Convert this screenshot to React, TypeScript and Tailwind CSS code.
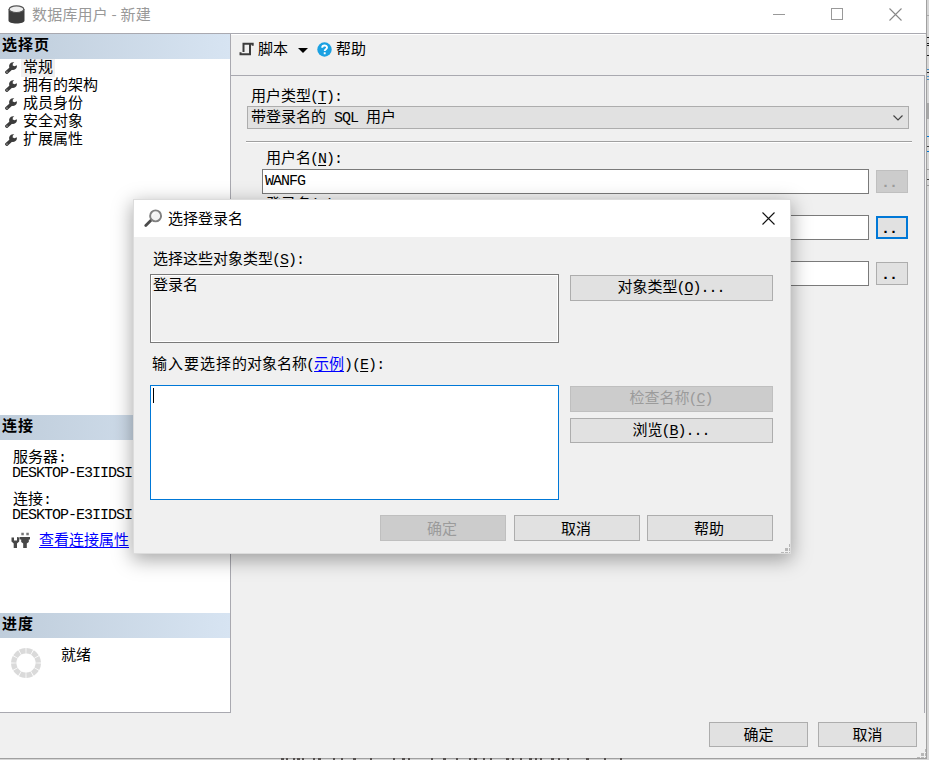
import React from 'react'

const pages = ['常规', '拥有的架构', '成员身份', '安全对象', '扩展属性']

// colour bands of the window that shows past the right edge
const edgeBands = [
  { top: 15, color: '#a9a9a9' },
  { top: 37, color: '#1a1a1a' },
  { top: 43, color: '#1a1a1a' },
  { top: 45, color: '#1a1a1a' },
  { top: 55, color: '#1a1a1a' },
  { top: 69, color: '#4a8fc4' },
  { top: 72, color: '#222222' },
  { top: 76, color: '#4a8fc4' },
  { top: 79, color: '#4a8fc4' },
  { top: 136, color: '#0078d7' },
  { top: 146, color: '#444444' },
  { top: 151, color: '#0078d7' },
  { top: 169, color: '#999999' },
  { top: 179, color: '#444444' },
  { top: 185, color: '#999999' },
]

const bottomTicks = [281, 286, 293, 297, 302, 313, 318, 333, 341, 353, 370, 393, 402, 408, 431, 443, 456, 469, 474, 483, 490, 506, 512, 520, 529, 535, 540, 551, 558, 567, 586, 604, 620]

const Latin: React.FC<{ children: React.ReactNode; className?: string }> = ({ children, className = '' }) => (
  <span className={`relative font-['Liberation_Mono',monospace] text-[15px] tracking-[-1px] whitespace-pre ${className}`}>{children}</span>
)

// accelerator key, e.g. (N):
const Key: React.FC<{ k: string; tail?: string }> = ({ k, tail = ':' }) => (
  <Latin className="-left-px">(<span className="underline underline-offset-2">{k}</span>){tail}</Latin>
)

const Button: React.FC<{ children: React.ReactNode; className?: string; disabled?: boolean }> = ({ children, className = '', disabled }) => (
  <button
    disabled={disabled}
    className={`border flex items-center justify-center leading-none whitespace-nowrap ${disabled ? 'bg-[#cccccc] border-[#bfbfbf] text-[#9b9b9b]' : 'bg-[#e1e1e1] border-[#adadad]'} ${className}`}
  >
    <span className="pb-[2px]">{children}</span>
  </button>
)

const PanelHeader: React.FC<{ title: string }> = ({ title }) => (
  <h2 className="h-[25px] shrink-0 pl-[2px] leading-[20px] font-bold tracking-[1px] bg-linear-to-r from-[#bfcddb] to-[#d7e4f2]">{title}</h2>
)

const Wrench: React.FC = () => (
  <svg width="12" height="12" viewBox="0 0 12 12" className="shrink-0 -mt-px">
    <path d="M1.800 10.200 6.500 6" stroke="#3c3c3c" strokeWidth="3.400" strokeLinecap="round" />
    <path d="M9.300.400A3.900 3.900 0 1 0 11.800 3.200L9.600 4.300 7.700 3.400 7.800 1.600z" fill="#3c3c3c" />
    <circle cx="2" cy="10" r=".6" fill="#fff" />
  </svg>
)

const Database: React.FC = () => (
  <svg width="17" height="19" viewBox="0 0 17 19">
    <path d="M.5 4v11.500c0 1.900 3.500 3 8 3s8-1.100 8-3V4z" fill="#3d3d3d" />
    <ellipse cx="8.500" cy="4.200" rx="7.300" ry="3.300" fill="#eeeeee" stroke="#555" strokeWidth="1.200" />
  </svg>
)

const Magnifier: React.FC = () => (
  <svg width="19" height="19" viewBox="0 0 19 19">
    <path d="M1.800 16.500 7 11.300" stroke="#4a4a4a" strokeWidth="2.800" strokeLinecap="round" />
    <circle cx="11.600" cy="6.900" r="5.500" fill="#f2f2f2" stroke="#808080" strokeWidth="1.900" />
    <path d="M8.500 6.500a3.200 3.200 0 0 1 3-2.700" fill="none" stroke="#fff" strokeWidth="1" />
  </svg>
)

const Plugs: React.FC = () => (
  <svg width="20" height="17" viewBox="0 0 20 17" fill="#484848">
    <path d="M.5 5.500v4l2.200 2V16h3.300v-4.500l2.200-2v-4L6 5v3.500H3V5.500z" />
    <path d="M8.500 5h10.500v2.500h-1.200V10l-2 1.500V16h-3.600v-4.500l-2-1.500V7.500H8.500z" />
    <path d="M10.300.800h2.500V3.300h-2.500zM15.300.800h2.500V3.300h-2.500z" fill="#777" />
  </svg>
)

const Grip: React.FC = () => (
  <svg width="9" height="9" viewBox="0 0 9 9" fill="#b8b8b8" className="absolute right-0 bottom-0">
    <path d="M0 8h3v1H0zM4 8h3v1H4zM4 4h3v3H4zM8 0h1v3H8zM8 4h1v3H8zM8 8h1v1H8z" />
  </svg>
)

const Close: React.FC<{ color: string }> = ({ color }) => (
  <svg width="13" height="13" viewBox="0 0 13 13">
    <path d="M.5.5l12 12M12.500.5l-12 12" stroke={color} strokeWidth="1.100" />
  </svg>
)

const Spinner: React.FC = () => (
  <svg width="30" height="30" viewBox="0 0 30 30">
    <circle cx="15" cy="15" r="12.300" fill="none" stroke="#dadada" strokeWidth="5.400" pathLength="120" strokeDasharray="8.800 1.200" strokeDashoffset="-0.600" />
  </svg>
)

const Sidebar: React.FC = () => (
  <aside className="w-[231px] h-[679px] bg-white border-r border-b border-[#a9a9b0] flex flex-col">
    <PanelHeader title="选择页" />
    <ul className="h-[356px]">
      {pages.map((p, i) => (
        <li key={p} className="flex items-center h-[18px] pl-[5px] gap-1">
          <Wrench />
          <span className={`h-[18px] leading-[14px] px-[2px] ${i === 0 ? 'bg-[#f0f0f0]' : ''}`}>{p}</span>
        </li>
      ))}
    </ul>
    <PanelHeader title="连接" />
    <div className="h-[173px] pl-3 pt-[8px]">
      <p className="h-4 leading-4 pl-px">服务器<Latin>:</Latin></p>
      <p className="h-4 leading-4"><Latin className="-top-px">DESKTOP-E3IIDSI</Latin></p>
      <p className="h-4 leading-4 pl-px mt-[10px]">连接<Latin>:</Latin></p>
      <p className="h-4 leading-4"><Latin className="-top-px">DESKTOP-E3IIDSI</Latin></p>
      <div className="flex items-center mt-[8px] h-5 -ml-px">
        <Plugs />
        <a className="ml-2 -mt-[3px] leading-5 text-[#0000ff] underline underline-offset-2">查看连接属性</a>
      </div>
    </div>
    <PanelHeader title="进度" />
    <div className="flex pl-[11px] pt-[10px]">
      <Spinner />
      <span className="ml-[20px] -mt-[4px] leading-5 h-5">就绪</span>
    </div>
  </aside>
)

const Field: React.FC<{ label?: React.ReactNode; value?: string; button?: string; disabled?: boolean }> = ({ label, value, button = '', disabled }) => (
  <div className="h-[46px]">
    <div className="h-[20px] pl-1 leading-[16px]">{label}</div>
    <div className="flex items-center">
      <div className="w-[607px] h-[25px] bg-white border border-[#7a7a7a] pl-[2px] leading-[20px]"><Latin className="-top-px">{value}</Latin></div>
      <Button disabled={disabled} className={`ml-[7px] w-8 h-[23px] ${button}`}>
        <Latin className="-left-[3px] top-px font-bold">..</Latin>
      </Button>
    </div>
  </div>
)

const Content: React.FC = () => (
  <main className="w-[694px] h-[679px] flex flex-col">
    <div className="h-[42px] border-t border-t-white border-b border-b-[#a9a9b0] flex items-start pl-2 pt-[4px]">
      <div className="flex items-center h-5">
        <svg width="15" height="14" viewBox="0 0 15 14" fill="none" stroke="#3c3c3c" strokeWidth="2">
          <path d="M4.500 10V1.800h9.200v2M11 2v10.200H1.500v-2M1 12.200h8" />
        </svg>
        <span className="ml-[4px] -mt-px">脚本</span>
        <svg width="10" height="5" viewBox="0 0 10 5" className="ml-[10px] mt-[2px]"><path d="M0 0h10L5 5z" /></svg>
        <svg width="15" height="15" viewBox="0 0 15 15" className="ml-[9px]">
          <circle cx="7.500" cy="7.500" r="7.200" fill="#1ba1e2" />
          <path d="M5.200 5.700c0-3 4.800-2.900 4.800-.2 0 1.700-2.300 1.700-2.300 3.500M7.700 10.300v1.900" fill="none" stroke="#fff" strokeWidth="1.900" />
        </svg>
        <span className="ml-[4px] -mt-px">帮助</span>
      </div>
    </div>
    <div className="h-[637px] border-r border-[#a9a9b0] pl-[15px] pt-[10px]">
      <div className="h-5 leading-[18px] pl-[5px]">用户类型<Key k="T" /></div>
      <div className="ml-px w-[662px] h-[23px] bg-[#e1e1e1] border border-[#adadad] flex items-center justify-between pl-[3px] pr-[5px] leading-[21px]">
        <span className="-mt-px">带登录名的<Latin> SQL </Latin>用户</span>
        <svg width="10" height="6" viewBox="0 0 10 6"><path d="M.5.5 5 5 9.500.5" fill="none" stroke="#444" strokeWidth="1.200" /></svg>
      </div>
      <div className="mt-3 w-[666px] h-[2px] bg-[#a0a0a0] border-b border-white" />
      <div className="pl-4 pt-[6px]">
        <Field label={<>用户名<Key k="N" /></>} value="WANFG" disabled />
        <Field label={<>登录名<Key k="L" /></>} button="border-2 border-[#0078d7]!" />
        <Field />
      </div>
    </div>
  </main>
)

const LoginDialog: React.FC = () => (
  <div role="dialog" className="absolute left-[133px] top-[199px] w-[658px] h-[355px] bg-[#f0f0f0] border border-[#dcdcdc] shadow-[0_5px_18px_1px_rgba(0,0,0,0.34)]">
    <div className="h-[37px] bg-white flex items-center pl-[10px] pr-[15px]">
      <Magnifier />
      <span className="ml-[5px] -mt-px grow">选择登录名</span>
      <Close color="#111" />
    </div>
    <div className="pl-4 pt-[11px]">
      <div className="h-[26px] leading-[19px] pl-[3px]">选择这些对象类型<Key k="S" /></div>
      <div className="flex gap-[11px]">
        <div className="w-[409px] h-[69px] border border-[#7a7a7a] p-px bg-white">
          <div className="h-full bg-[#f0f0f0] pl-px leading-[15px]">登录名</div>
        </div>
        <Button className="w-[203px] h-[26px] mt-px">对象类型<Key k="O" tail="..." /></Button>
      </div>
      <div className="h-[42px] leading-[18px] pt-[11px] pl-[2px]">
        <span className="tracking-[1px]">输入要选择</span>的对象名称<Latin className="-left-px">(</Latin><a className="relative -left-px text-[#0000ff] underline underline-offset-2">示例</a><Latin className="-left-px">)</Latin><Key k="E" />
      </div>
      <div className="flex gap-[11px]">
        <div className="w-[409px] h-[115px] border border-[#0078d7] bg-white p-[2px]">
          <div className="w-px h-[15px] bg-black" />
        </div>
        <div className="pt-px flex flex-col gap-[6px]">
          <Button disabled className="w-[203px] h-[26px]">检查名称<Key k="C" tail="" /></Button>
          <Button className="w-[203px] h-[25px]">浏览<Key k="B" tail="..." /></Button>
        </div>
      </div>
      <div className="flex pt-[15px] pl-[230px]">
        <Button disabled className="w-[126px] h-[26px] pr-[2px]">确定</Button>
        <Button className="w-[126px] h-[26px] ml-2 pr-[2px]">取消</Button>
        <Button className="w-[126px] h-[26px] ml-[7px] pr-[2px]">帮助</Button>
      </div>
    </div>
    <Grip />
  </div>
)

const App: React.FC = () => {
  return (
    <div className="relative w-[929px] h-[760px] overflow-hidden bg-[#d6d6d6] text-black text-[15px] font-['Noto_Sans_CJK_SC',sans-serif]">
      <div className="relative w-[927px] h-[759px] bg-[#f0f0f0] border-r border-b border-[#a0a0a0]">
        <header className="h-[34px] bg-white border-b border-[#a9a9b0] flex items-center pl-2 pr-[24px] pb-[5px]">
          <Database />
          <span className="ml-[7px] grow text-[#999] tracking-[0.2px]">数据库用户 - 新建</span>
          <div className="flex items-center gap-[46px]">
            <div className="w-3 h-px bg-[#999]" />
            <div className="w-3 h-3 border border-[#999]" />
            <Close color="#888" />
          </div>
        </header>
        <div className="flex">
          <Sidebar />
          <Content />
        </div>
        <footer className="flex justify-end gap-[10px] pr-[9px] pt-[9px]">
          <Button className="w-[99px] h-[25px]">确定</Button>
          <Button className="w-[99px] h-[25px]">取消</Button>
        </footer>
        <Grip />
      </div>
      <svg width="2" height="760" className="absolute right-0 top-0">
        <rect y="103" width="2" height="16" fill="#a8a8a8" />
        {edgeBands.map(b => <rect key={b.top} y={b.top} width="2" height="1" fill={b.color} />)}
      </svg>
      <svg width="929" height="2" className="absolute left-0 bottom-0">
        {bottomTicks.map((x, i) => <rect key={x} x={x} width={i % 3 === 0 ? 3 : 2} height="2" fill="#55504f" />)}
      </svg>
      <LoginDialog />
    </div>
  )
}

export default App
